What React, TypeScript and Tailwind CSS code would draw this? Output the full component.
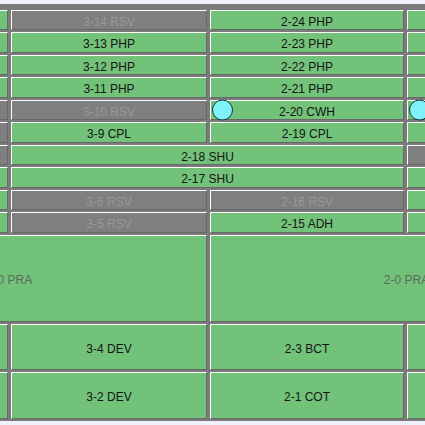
type Tone = "green" | "gray" | "pra";

type CellProps = {
  label?: string;
  tone?: Tone;
  wide?: boolean;
  dot?: boolean;
};

const tones: Record<Tone, string> = {
  green: "bg-[#73c27a] text-[#141414]",
  gray: "bg-[#7f7f7f] text-[#989898]",
  pra: "bg-[#73c27a] text-[#5c6a5c]",
};

function Cell({ label = "", tone = "green", wide = false, dot = false }: CellProps) {
  return (
    <div className={`${wide ? "col-span-2" : ""} min-w-0 pr-[3px] pb-[2px]`}>
      <div
        className={`relative flex h-full items-center justify-center whitespace-nowrap border border-t-white border-l-white border-b-[#686868] border-r-[#686868] pt-[3px] ${tones[tone]}`}
      >
        {dot && (
          <span className="absolute left-[1px] top-1/2 h-[21px] w-[21px] -translate-y-1/2 rounded-full border border-[#0c3a3c] bg-[#7ff1f9]" />
        )}
        {label}
      </div>
    </div>
  );
}

export default function App() {
  return (
    <div className="h-[425px] w-[425px] overflow-hidden bg-[#eef1f9] pt-[4px] font-['Liberation_Sans',Arial,sans-serif] text-[12px] leading-none">
      <div className="ml-[-188px] w-max bg-[#7b7b7b] pt-[6px]">
        <div className="grid grid-cols-[199px_199px_197px_199px] grid-rows-[22px_23px_22px_23px_22px_23px_22px_23px_22px_23px_89px_48px_49px]">
          <Cell />
          <Cell label="3-14 RSV" tone="gray" />
          <Cell label="2-24 PHP" />
          <Cell />

          <Cell />
          <Cell label="3-13 PHP" />
          <Cell label="2-23 PHP" />
          <Cell />

          <Cell />
          <Cell label="3-12 PHP" />
          <Cell label="2-22 PHP" />
          <Cell />

          <Cell />
          <Cell label="3-11 PHP" />
          <Cell label="2-21 PHP" />
          <Cell />

          <Cell tone="gray" />
          <Cell label="3-10 RSV" tone="gray" />
          <Cell label="2-20 CWH" dot />
          <Cell dot />

          <Cell tone="gray" />
          <Cell label="3-9 CPL" />
          <Cell label="2-19 CPL" />
          <Cell />

          <Cell tone="gray" />
          <Cell label="2-18 SHU" wide />
          <Cell tone="gray" />

          <Cell />
          <Cell label="2-17 SHU" wide />
          <Cell />

          <Cell />
          <Cell label="3-6 RSV" tone="gray" />
          <Cell label="2-16 RSV" tone="gray" />
          <Cell />

          <Cell />
          <Cell label="3-5 RSV" tone="gray" />
          <Cell label="2-15 ADH" />
          <Cell />

          <Cell label="3-0 PRA" tone="pra" wide />
          <Cell label="2-0 PRA" tone="pra" wide />

          <Cell />
          <Cell label="3-4 DEV" />
          <Cell label="2-3 BCT" />
          <Cell />

          <Cell />
          <Cell label="3-2 DEV" />
          <Cell label="2-1 COT" />
          <Cell />
        </div>
      </div>
    </div>
  );
}
